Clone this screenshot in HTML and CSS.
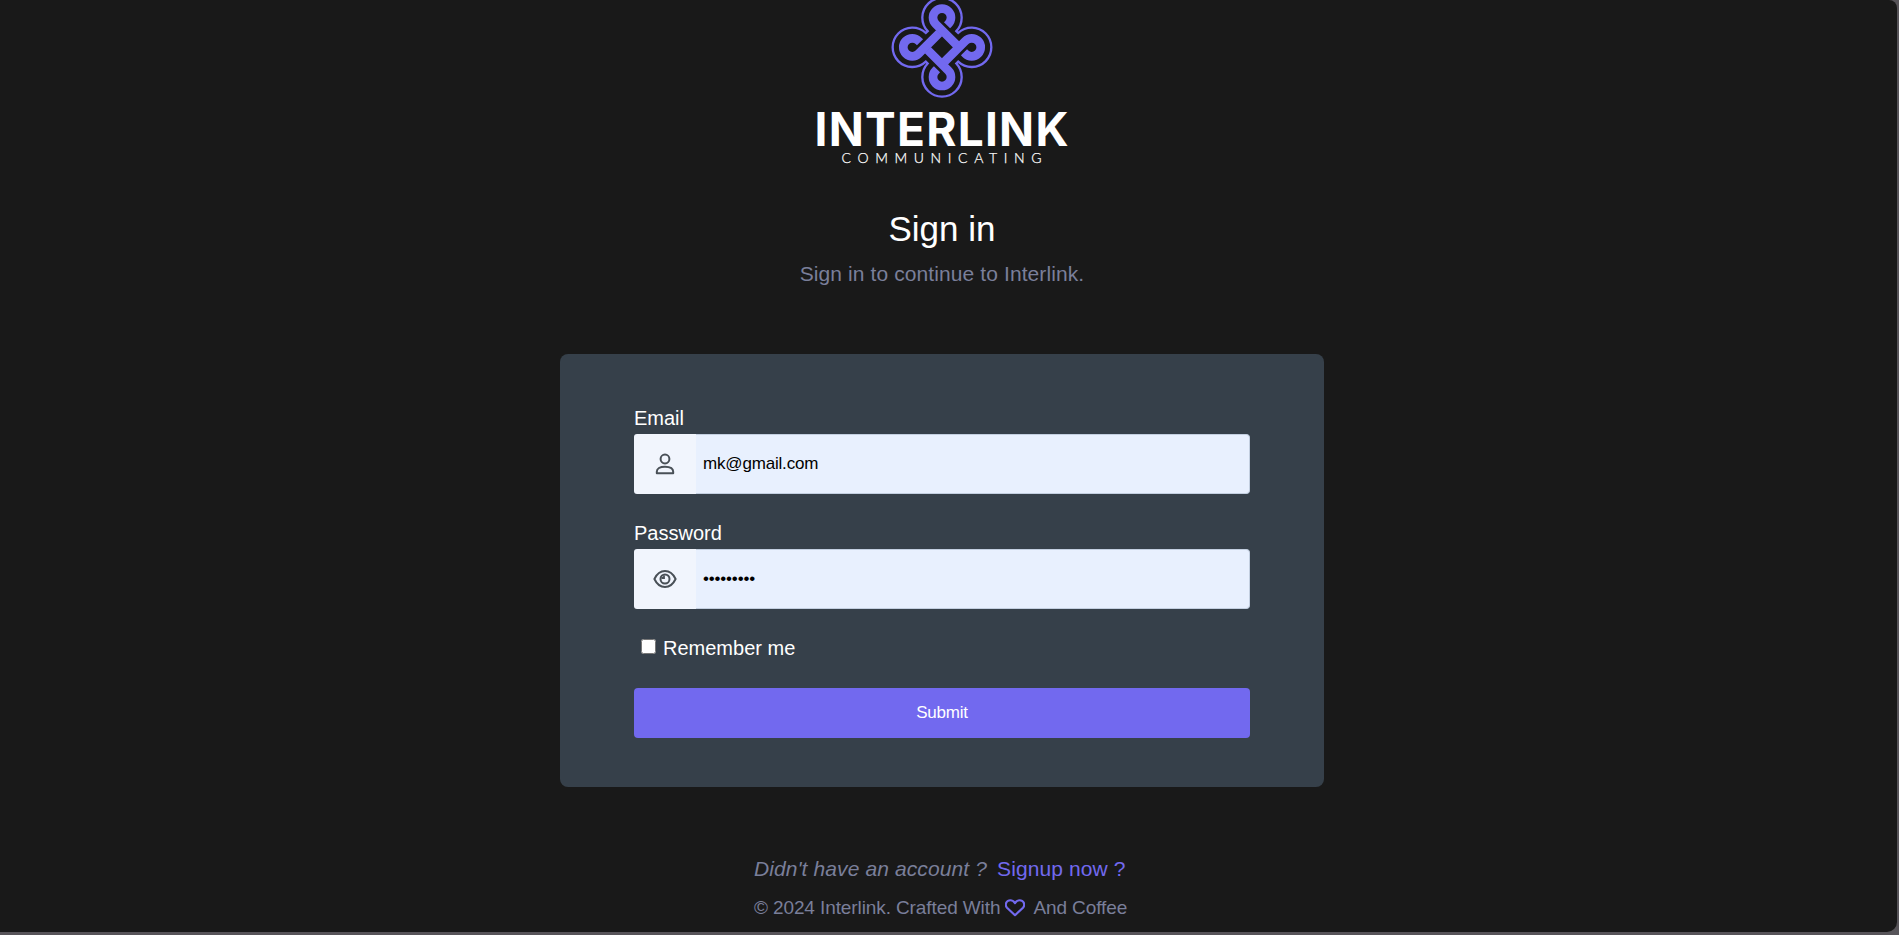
FILE: index.html
```html
<!DOCTYPE html>
<html lang="en">
<head>
<meta charset="utf-8">
<title>Interlink - Sign in</title>
<link rel="stylesheet" href="styles.css">
</head>
<body>
<div class="page">
  <header class="header">
    <svg class="logo" viewBox="0 0 280 175" role="img" aria-label="Interlink Communicating">
      <defs>
        <path id="strand" d="M15 -66L19 -70A27 27 0 1 0 -19 -70L43 -8"/>
      </defs>
      <g transform="translate(140 47.3) scale(.3333)" fill="none" stroke="#7269ef">
        <path stroke-width="7" d="M-43 -48.600A59 59 0 1 1 43 -48.600L48.600 -43A59 59 0 1 1 48.600 43L43 48.600A59 59 0 1 1 -43 48.600L-48.600 43A59 59 0 1 1 -48.600 -43Z"/>
        <g stroke-width="26">
          <use href="#strand"/>
          <use href="#strand" transform="rotate(90)"/>
          <use href="#strand" transform="rotate(180)"/>
          <use href="#strand" transform="rotate(270)"/>
        </g>
      </g>
      <text class="logo-name" x="12.500" y="145.500" textLength="254">INTERLINK</text>
      <text class="logo-tag" x="39.500" y="163" textLength="200">COMMUNICATING</text>
    </svg>
    <h1 class="title">Sign in</h1>
    <p class="subtitle">Sign in to continue to Interlink.</p>
  </header>

  <form class="card">
    <label class="label" for="email">Email</label>
    <div class="field">
      <span class="field-icon">
        <svg width="20" height="22" viewBox="0 0 20 22" fill="none" stroke="#495057" stroke-width="2">
          <circle cx="10" cy="6" r="4.400"/>
          <path d="M1.800 20.200V18.800C1.800 15.500 4.800 13.700 10 13.700S18.200 15.500 18.200 18.800V20.200Z" stroke-linejoin="round"/>
        </svg>
      </span>
      <input class="input" id="email" type="text" value="mk@gmail.com">
    </div>
    <label class="label" for="password">Password</label>
    <div class="field">
      <span class="field-icon">
        <svg width="24" height="20" viewBox="0 0 24 20" fill="none" stroke="#495057" stroke-width="2">
          <path d="M1.400 10C4 4.500 7.600 2 12 2S20 4.500 22.600 10C20 15.500 16.400 18 12 18S4 15.500 1.400 10Z" stroke-linejoin="round"/>
          <circle cx="12" cy="10" r="4.500"/>
          <path d="M11 6.500V9H8.500" stroke-width="1.800"/>
        </svg>
      </span>
      <input class="input" id="password" type="password" value="123456789">
    </div>
    <label class="remember"><input class="check" type="checkbox">Remember me</label>
    <button class="submit" type="button">Submit</button>
  </form>

  <footer class="footer">
    <p class="signup"><i>Didn't have an account ?</i><a class="link">Signup now ?</a></p>
    <p class="credit"><span>© 2024 Interlink. Crafted With</span>
      <svg class="heart" width="20" height="18" viewBox="0 0 20 18" fill="none" stroke="#7269ef" stroke-width="2.200" stroke-linejoin="round"><path d="M10 16.200L2 8.800C0 6.600.6 3.200 2.900 1.900C5.200.6 8.200 1.400 10 4C11.800 1.400 14.800.6 17.100 1.900C19.400 3.200 20 6.600 18 8.800Z"/></svg>
      <span>And Coffee</span></p>
  </footer>
</div>
</body>
</html>
```
FILE: styles.css
```css
* { box-sizing: border-box; }
body {
  margin: 0;
  height: 935px;
  overflow: hidden;
  background: #575459;
  font-family: "Liberation Sans", Arial, sans-serif;
  font-size: 20px;
  color: #fff;
}
.page {
  width: 1897px;
  height: 932px;
  padding-right: 13px;
  background: #191919;
  border-radius: 0 8px 10px 0;
  display: flex;
  flex-direction: column;
  align-items: center;
}
.header {
  height: 354px;
  display: flex;
  flex-direction: column;
  align-items: center;
}
.logo { width: 280px; height: 175px; overflow: visible; }
.logo-name { font: 700 46px Inter, sans-serif; fill: #fff; }
.logo-tag { font: 300 14px Lato, sans-serif; fill: #fff; stroke: #fff; stroke-width: .25px; }
.title { margin: 33px 0 0; font-size: 35px; font-weight: 400; line-height: 42px; }
.subtitle { margin: 8px 0 0; font-size: 21px; line-height: 32px; color: #7a7f9a; letter-spacing: .1px; }
.card {
  width: 764px;
  height: 433px;
  padding: 49px 74px 0;
  background: #36404a;
  border-radius: 8px;
  display: flex;
  flex-direction: column;
}
.label { line-height: 31px; }
.field { display: flex; height: 60px; margin-bottom: 24px; }
.field-icon {
  width: 62px;
  display: flex;
  align-items: center;
  justify-content: center;
  background: #f1f5fd;
  border-radius: 3px 0 0 3px;
}
.input {
  flex: 1;
  min-width: 0;
  padding: 0 7px;
  border: 1px solid #c3cfe0;
  border-left: 0;
  border-radius: 0 4px 4px 0;
  background: #e8f0fe;
  color: #000;
  font: 17px "Liberation Sans", Arial, sans-serif;
  letter-spacing: -.18px;
}
.remember { display: flex; align-items: center; height: 31px; }
.check { width: 15px; height: 15px; margin: -4px 7px 0 7px; }
.submit {
  height: 50px;
  margin-top: 24px;
  border: 0;
  border-radius: 4px;
  background: #7269ef;
  color: #fff;
  font: 17px "Liberation Sans", Arial, sans-serif;
  letter-spacing: -.2px;
}
.footer { padding: 65px 3px 0 0; color: #7a7f9a; }
.signup, .credit { margin: 0; display: flex; align-items: center; }
.signup { font-size: 21px; line-height: 34px; letter-spacing: .11px; }
.link { margin-left: 10px; color: #7269ef; }
.credit { margin-top: 6px; font-size: 19px; line-height: 32px; letter-spacing: -.1px; }
.heart { margin: 0 8px 0 5px; }
```
